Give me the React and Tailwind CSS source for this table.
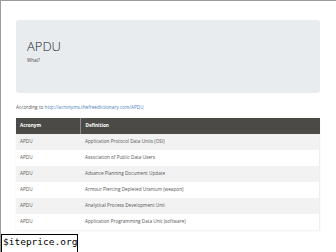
import React from "react"

const rows = [
  "Application Protocol Data Units (OSI)",
  "Association of Public Data Users",
  "Advance Planning Document Update",
  "Armour Piercing Depleted Uranium (weapon)",
  "Analytical Process Development Unit",
  "Application Programming Data Unit (software)",
]

export default function App() {
  return (
    <div
      className="relative w-[336px] h-[252px] overflow-hidden bg-white border-l border-t border-[#9b9b9b]"
      style={{ fontFamily: '"Open Sans", "Liberation Sans", sans-serif' }}
    >
      <div className="pl-[15px] pr-[16px] pt-[19px]">
        <div className="h-[73px] rounded-[3px] bg-[#e9ecef] px-[11px] pt-[20px]">
          <h1 className="text-[13px] leading-none font-light text-[#212529]">APDU</h1>
          <p className="mt-[5px] text-[4.5px] leading-none text-[#444]">What?</p>
        </div>

        <p className="mt-[12px] text-[4.7px] leading-none text-[#555]">
          According to{" "}
          <a className="text-[#4a7fc1]">http://acronyms.thefreedictionary.com/APDU</a>
        </p>

        <table className="mt-[8px] w-full border-collapse text-[4.7px] text-[#555] shadow-[0_1px_2px_rgba(0,0,0,0.06)]">
          <thead>
            <tr className="h-[16px] bg-[#4b4a47] text-white font-bold">
              <th className="w-[64px] pl-[4px] text-left border-r border-[#8a8a86]">Acronym</th>
              <th className="pl-[5px] text-left">Definition</th>
            </tr>
          </thead>
          <tbody>
            {rows.map((d, i) => (
              <tr key={i} className={i % 2 === 0 ? "h-[16px] bg-[#f2f2f2]" : "h-[16px] bg-white"}>
                <td className="pl-[4px]">APDU</td>
                <td className="pl-[5px] border-r border-[#eeeeee]">{d}</td>
              </tr>
            ))}
          </tbody>
        </table>
      </div>

      <div
        className="absolute left-0 top-[233px] w-[77px] h-[22px] bg-white border border-black pl-[1px] pt-[2px] text-[9.5px] leading-none text-black"
        style={{ fontFamily: '"DejaVu Sans Mono", monospace' }}
      >
        $iteprice.org
      </div>
    </div>
  )
}
